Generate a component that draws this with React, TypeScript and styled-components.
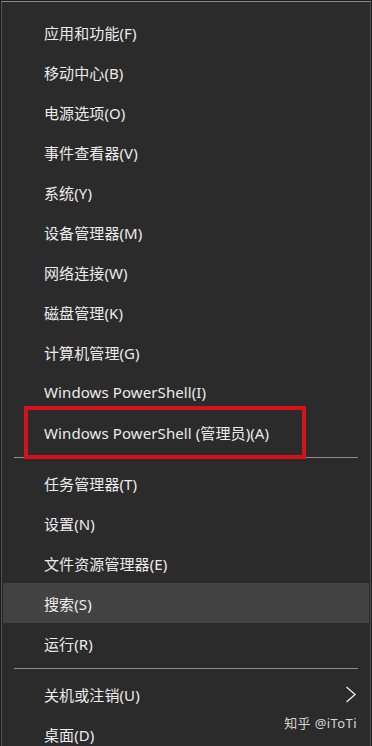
import React from 'react';
import styled, { createGlobalStyle } from 'styled-components';

const GlobalStyle = createGlobalStyle`
  html, body {
    margin: 0;
    padding: 0;
    background: #1e1e1e;
  }
  body {
    font-family: "Segoe UI", "Noto Sans", "Noto Sans CJK SC", sans-serif;
  }
`;

const Menu = styled.nav`
  position: relative;
  box-sizing: border-box;
  width: 370px;
  height: 745px;
  margin: 1px 1px 0 1px;
  background: #2b2b2b;
  border-top: 1px solid #8a8a8a;
  border-left: 1px solid #4e4e4e;
  border-right: 1px solid #4e4e4e;
  padding-top: 10px;
  overflow: hidden;
`;

const Item = styled.div<{ $active?: boolean }>`
  position: relative;
  height: 40px;
  display: flex;
  align-items: center;
  padding-left: 41px;
  margin: 0 1px;
  background: ${p => (p.$active ? '#424242' : 'transparent')};
  color: #ececec;
  font-size: 15px;
  letter-spacing: 0.1px;
  white-space: nowrap;
`;

const Separator = styled.div`
  height: 1px;
  margin: 5px 12px 5px 12px;
  background: #8c8c8c;
`;

const Highlight = styled.div`
  position: absolute;
  left: 21px;
  top: -6px;
  width: 282px;
  height: 53px;
  box-sizing: border-box;
  border: 4px solid #d5121b;
  pointer-events: none;
`;

const Chevron = styled.svg`
  position: absolute;
  right: 12px;
  top: 12px;
`;

const Watermark = styled.div`
  position: absolute;
  right: 13px;
  bottom: 14px;
  color: #d6d6d6;
  font-family: "Noto Sans", "Noto Sans CJK SC", sans-serif;
  font-size: 13px;
  letter-spacing: 0.4px;
`;

const groups = [
  [
    '应用和功能(F)',
    '移动中心(B)',
    '电源选项(O)',
    '事件查看器(V)',
    '系统(Y)',
    '设备管理器(M)',
    '网络连接(W)',
    '磁盘管理(K)',
    '计算机管理(G)',
    'Windows PowerShell(I)',
    'Windows PowerShell (管理员)(A)',
  ],
  ['任务管理器(T)', '设置(N)', '文件资源管理器(E)', '搜索(S)', '运行(R)'],
  ['关机或注销(U)', '桌面(D)'],
];

const App: React.FC = () => {
  return (
    <>
      <GlobalStyle />
      <Menu>
        {groups.map((group, gi) => (
          <React.Fragment key={gi}>
            {gi > 0 && <Separator />}
            {group.map(label => (
              <Item key={label} $active={label === '搜索(S)'}>
                {label}
                {label.includes('管理员') && <Highlight />}
                {label === '关机或注销(U)' && (
                  <Chevron width="12" height="17" viewBox="0 0 12 17">
                    <path d="M1.5 1 L10 8.5 L1.5 16" fill="none" stroke="#e6e6e6" strokeWidth="1.4" />
                  </Chevron>
                )}
              </Item>
            ))}
          </React.Fragment>
        ))}
        <Watermark>知乎 @iToTi</Watermark>
      </Menu>
    </>
  );
};

export default App;
